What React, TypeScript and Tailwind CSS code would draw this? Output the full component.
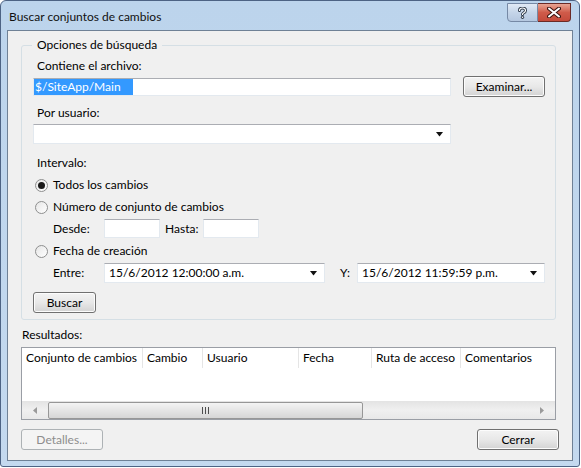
import React from "react";

const font = { fontFamily: 'Lato, "Noto Sans", sans-serif' };

function WinButton({ label, width, disabled = false }: { label: string; width: string; disabled?: boolean }) {
    return (
        <div
            className={`${width} h-[21px] flex items-center justify-center rounded-[3px] border text-[12px] ${
                disabled
                    ? "border-[#adb2b5] bg-[#f4f4f4] text-[#8d8d8d]"
                    : "border-[#707070] bg-gradient-to-b from-[#f3f3f3] via-[#e8e8e8] to-[#d3d3d3] text-black shadow-[inset_0_0_0_1px_#fcfcfc]"
            }`}
        >
            {label}
        </div>
    );
}

function Radio({ checked }: { checked?: boolean }) {
    return (
        <div className="w-[13px] h-[13px] rounded-full border border-[#8e8f8f] bg-gradient-to-br from-[#e6e6e6] to-[#ffffff] flex items-center justify-center">
            {checked && <div className="w-[7px] h-[7px] rounded-full bg-[#1a1a1a]" />}
        </div>
    );
}

function Arrow() {
    return (
        <svg width="8" height="5" viewBox="0 0 8 5" className="shrink-0">
            <path d="M0 0 H7 L3.5 4.5 Z" fill="#111" />
        </svg>
    );
}

function Combo({ width, text }: { width: string; text?: string }) {
    return (
        <div className={`${width} h-[20px] flex items-center justify-between bg-white border border-[#e3e9ef] border-t-[#abadb3] pl-[4px] pr-[6px] text-[12px]`}>
            <span>{text ?? ""}</span>
            <Arrow />
        </div>
    );
}

function RadioRow({ label, checked }: { label: string; checked?: boolean }) {
    return (
        <div className="h-[20px] flex items-center gap-[5px] pl-[2px]">
            <Radio checked={checked} />
            <span>{label}</span>
        </div>
    );
}

const columns = [
    { name: "Conjunto de cambios", w: "w-[121px]" },
    { name: "Cambio", w: "w-[60px]" },
    { name: "Usuario", w: "w-[96px]" },
    { name: "Fecha", w: "w-[73px]" },
    { name: "Ruta de acceso", w: "w-[89px]" },
    { name: "Comentarios", w: "flex-1" },
];

export default function App() {
    return (
        <div className="w-[581px] h-[468px] bg-white text-[12px] text-black leading-[16px]" style={font}>
            <div className="w-[580px] h-[467px] rounded-t-[6px] rounded-b-[3px] border border-[#4d6384] bg-gradient-to-b from-[#bcd4ec] to-[#c4d9ef] flex flex-col">
                {/* title bar */}
                <div className="h-[29px] flex items-start justify-between pl-[8px] pr-[8px]">
                    <span className="mt-[8px] text-[12px] text-[#111]">Buscar conjuntos de cambios</span>
                    <div className="flex mt-[2px]">
                        <div className="w-[31px] h-[19px] rounded-bl-[4px] border border-[#7689a5] bg-gradient-to-b from-[#e1eaf5] via-[#c5d5e9] to-[#b5c8e0] flex items-center justify-center">
                            <svg width="9" height="12" viewBox="0 0 9 12">
                                <path d="M1.5 3.5 Q1.5 1 4.5 1 Q7.5 1 7.5 3.5 Q7.5 5 5.5 6 Q4.5 6.5 4.5 7.5" fill="none" stroke="#2a3646" strokeWidth="3" strokeLinecap="round" />
                                <circle cx="4.5" cy="10.3" r="1.6" fill="#2a3646" />
                                <path d="M1.5 3.5 Q1.5 1 4.5 1 Q7.5 1 7.5 3.5 Q7.5 5 5.5 6 Q4.5 6.5 4.5 7.5" fill="none" stroke="#ffffff" strokeWidth="1.2" strokeLinecap="round" />
                                <circle cx="4.5" cy="10.3" r="0.8" fill="#ffffff" />
                            </svg>
                        </div>
                        <div className="w-[33px] h-[19px] rounded-br-[4px] border border-l-0 border-[#6b2a26] bg-gradient-to-b from-[#e8a493] via-[#cf5b4a] to-[#c44a3b] flex items-center justify-center">
                            <svg width="14" height="11" viewBox="0 0 14 11">
                                <path d="M2 1.5 L12 9.5 M12 1.5 L2 9.5" stroke="#3b1410" strokeWidth="4" strokeLinecap="round" />
                                <path d="M2 1.5 L12 9.5 M12 1.5 L2 9.5" stroke="#ffffff" strokeWidth="2" strokeLinecap="round" />
                            </svg>
                        </div>
                    </div>
                </div>

                {/* client area */}
                <div className="mx-[6px] h-[431px] border border-[#6f8196] bg-[#f0f0f0] flex flex-col pl-[13px] pr-[14px]">
                    {/* group box */}
                    <div className="relative mt-[14px] w-[535px] border border-[#d5dfe5] rounded-[3px] pl-[11px] pb-[6px]">
                        <span className="absolute -top-[9px] left-[10px] px-[5px] bg-[#f0f0f0]">Opciones de búsqueda</span>
                        <div className="mt-[12px] pl-[4px]">Contiene el archivo:</div>
                        <div className="mt-[2px] h-[21px] flex items-center">
                            <div className="w-[418px] h-[18px] mt-[1px] flex items-center bg-white border border-[#e3e9ef] border-t-[#abadb3]">
                                <span className="h-[16px] bg-[#3399ff] text-white pl-[1px] w-[99px]">$/SiteApp/Main</span>
                            </div>
                            <div className="ml-[12px]">
                                <WinButton label="Examinar..." width="w-[82px]" />
                            </div>
                        </div>
                        <div className="mt-[8px] pl-[4px]">Por usuario:</div>
                        <div className="mt-[3px]">
                            <Combo width="w-[418px]" />
                        </div>
                        <div className="mt-[11px] pl-[4px]">Intervalo:</div>
                        <div className="mt-[4px]">
                            <RadioRow label="Todos los cambios" checked />
                        </div>
                        <div className="mt-[2px]">
                            <RadioRow label="Número de conjunto de cambios" />
                        </div>
                        <div className="mt-[2px] h-[19px] flex items-center pl-[20px]">
                            <span className="w-[51px]">Desde:</span>
                            <div className="w-[56px] h-[19px] bg-white border border-[#e3e9ef] border-t-[#abadb3]" />
                            <span className="ml-[5px] w-[38px]">Hasta:</span>
                            <div className="w-[56px] h-[19px] bg-white border border-[#e3e9ef] border-t-[#abadb3]" />
                        </div>
                        <div className="mt-[3px]">
                            <RadioRow label="Fecha de creación" />
                        </div>
                        <div className="mt-[2px] h-[20px] flex items-center pl-[20px]">
                            <span className="w-[51px]">Entre:</span>
                            <Combo width="w-[221px]" text="15/6/2012 12:00:00 a.m." />
                            <span className="ml-[15px] w-[17px]">Y:</span>
                            <Combo width="w-[188px]" text="15/6/2012 11:59:59 p.m." />
                        </div>
                        <div className="mt-[9px]">
                            <WinButton label="Buscar" width="w-[63px]" />
                        </div>
                    </div>

                    {/* results */}
                    <div className="mt-[7px] pl-[1px]">Resultados:</div>
                    <div className="mt-[4px] w-[535px] h-[73px] border border-[#9a9ea5] bg-white flex flex-col">
                        <div className="h-[20px] flex">
                            {columns.map((c) => (
                                <div key={c.name} className={`${c.w} h-full flex items-center pl-[4px] whitespace-nowrap overflow-hidden border-r border-[#e5e5e5] last:border-r-0`}>
                                    {c.name}
                                </div>
                            ))}
                        </div>
                        <div className="flex-1" />
                        <div className="h-[18px] flex items-center bg-gradient-to-b from-[#e3e3e3] via-[#f0f0f0] to-[#e8e8e8]">
                            <div className="w-[26px] flex justify-center">
                                <svg width="4" height="7" viewBox="0 0 4 7">
                                    <path d="M4 0 V7 L0 3.5 Z" fill="#9a9a9a" />
                                </svg>
                            </div>
                            <div className="w-[315px] h-[17px] rounded-[2px] border border-[#979797] bg-gradient-to-b from-[#f4f4f4] via-[#e5e5e5] to-[#d6d6d6] flex items-center justify-center">
                                <svg width="7" height="7" viewBox="0 0 7 7">
                                    <path d="M0.5 0 V7 M3.5 0 V7 M6.5 0 V7" stroke="#4d4d4d" strokeWidth="1" />
                                </svg>
                            </div>
                            <div className="flex-1" />
                            <div className="w-[26px] flex justify-center">
                                <svg width="4" height="7" viewBox="0 0 4 7">
                                    <path d="M0 0 V7 L4 3.5 Z" fill="#9a9a9a" />
                                </svg>
                            </div>
                        </div>
                    </div>

                    {/* footer buttons */}
                    <div className="mt-[9px] w-[538px] flex justify-between">
                        <WinButton label="Detalles..." width="w-[82px]" disabled />
                        <WinButton label="Cerrar" width="w-[82px]" />
                    </div>
                </div>
            </div>
        </div>
    );
}
